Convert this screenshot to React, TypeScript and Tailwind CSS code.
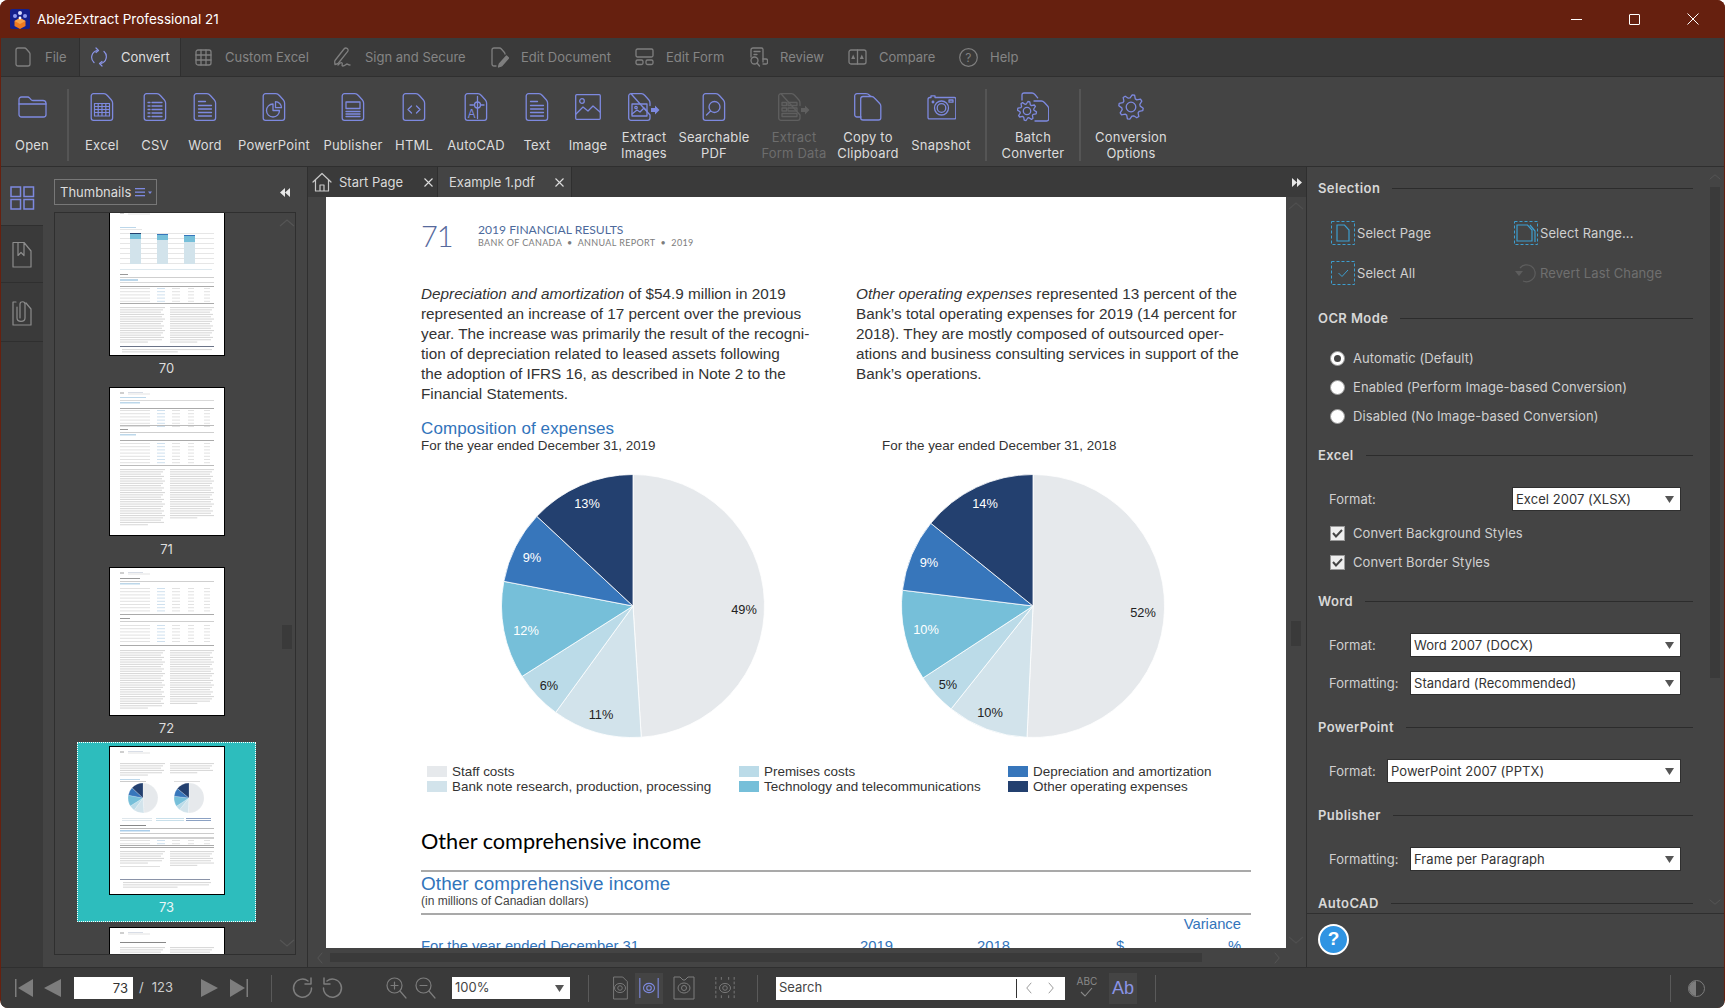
import React from "react";

const BLUE = "#7d89df";
const GRAY = "#7f7f7f";

const DOC = "M3.5 .7H14c1.5 0 2.5.8 3.4 1.8l4 4.5c.8.9 1.2 1.8 1.2 3V25c0 1.3-1 2.3-2.3 2.3H3.5c-1.3 0-2.3-1-2.3-2.3V3c0-1.3 1-2.3 2.3-2.3z";

function Svg({ w, h, c = BLUE, sw = 1.3, children, className }: { w: number; h: number; c?: string; sw?: number; children: React.ReactNode; className?: string }) {
  return (
    <svg width={w} height={h} viewBox={`0 0 ${w} ${h}`} fill="none" stroke={c} strokeWidth={sw} strokeLinecap="round" strokeLinejoin="round" className={className}>
      {children}
    </svg>
  );
}

function gearPath(cx: number, cy: number, ro: number, ri: number, teeth: number) {
  let d = "";
  const n = teeth * 4;
  for (let i = 0; i < n; i++) {
    const a = (i / n) * Math.PI * 2 + Math.PI / n;
    const r = i % 4 < 2 ? ro : ri;
    const x = cx + r * Math.sin(a);
    const y = cy - r * Math.cos(a);
    d += `${i === 0 ? "M" : "L"}${x.toFixed(1)} ${y.toFixed(1)} `;
  }
  return d + "Z";
}

function Doc({ children, c = BLUE }: { children?: React.ReactNode; c?: string }) {
  return (
    <Svg w={24} h={28} c={c}>
      <path d={DOC} />
      {children}
    </Svg>
  );
}

const FileLines = () => (
  <Doc>
    <path d="M5.5 8.5h7M5.5 12.5h13M5.5 16h13M5.5 19.5h13M5.5 23h13" />
  </Doc>
);

const icons: Record<string, React.ReactNode> = {
  open: (
    <Svg w={29} h={22}>
      <path d="M1 3.5C1 2 2 1 3.5 1h6c1 0 1.6.4 2.2 1.1l1.3 1.6c.5.6 1 .8 1.8.8H25c1.7 0 3 1.3 3 3V18.5c0 1.4-1.1 2.5-2.5 2.5h-22C2.100 21 1 19.900 1 18.500z" />
      <path d="M1 8h27" />
    </Svg>
  ),
  excel: (
    <Doc>
      <path d="M4.500 10.500h15v12.500h-15zM4.500 13.500h15M4.500 16.500h15M4.500 19.500h15M8.200 10.500v12.500M12 10.500v12.500M15.800 10.500v12.500" strokeWidth={1.2} />
    </Doc>
  ),
  csv: (
    <Doc>
      <path d="M5 9.500h2M9 9.500h10M5 13h2M9 13h10M5 16.500h2M9 16.500h10M5 20h2M9 20h10M5 23.500h2M9 23.500h10" />
    </Doc>
  ),
  word: <FileLines />,
  ppt: (
    <Doc>
      <path d="M11 11a6.500 6.500 0 1 0 6.500 6.500H11z" />
      <path d="M13.500 8.700a6 6 0 0 1 6 6h-6z" />
    </Doc>
  ),
  pub: (
    <Doc>
      <path d="M5 9h14v6.500H5zM5 18.500h14M5 21h14M5 23.500h14" />
    </Doc>
  ),
  html: (
    <Doc>
      <path d="M9.500 13l-3.500 3.500 3.500 3.500M14.500 13l3.500 3.500-3.500 3.500" />
    </Doc>
  ),
  cad: (
    <Doc>
      <path d="M13.500 3.500v22M6 12h3.500M17 12h3" />
      <circle cx="13.500" cy="12" r="3" />
      <text x="3.500" y="25" fontSize="12" fill={BLUE} stroke="none" fontFamily="Inter">A</text>
    </Doc>
  ),
  text: <FileLines />,
  image: (
    <Svg w={26} h={26}>
      <rect x=".7" y=".7" width="24.600" height="24.600" rx="1" />
      <circle cx="7" cy="7" r="2.300" />
      <path d="M1 20l7-7 5 4 5-5 7 6" />
    </Svg>
  ),
  eimg: (
    <Svg w={32} h={28}>
      <path d="M3 .7h10.500c1.500 0 2.500.8 3.400 1.800l4 4.500c.8.9 1.100 1.800 1.100 3v2.500M22 22v3c0 1.300-1 2.300-2.300 2.300H3c-1.300 0-2.300-1-2.300-2.300V3C.7 1.700 1.700.7 3 .7z" />
      <rect x="4" y="11" width="15" height="12" />
      <circle cx="8" cy="14.500" r="1.200" />
      <path d="M4 21l5-4 3 2 4-4 3 3" />
      <path d="M23 15h4v-2.500l4.500 4.500-4.500 4.500V19h-4z" fill={BLUE} stroke="none" />
    </Svg>
  ),
  search: (
    <Doc>
      <circle cx="12.500" cy="14" r="5.500" />
      <path d="M8.500 18l-4 4" />
    </Doc>
  ),
  eform: (
    <Svg w={32} h={28} c="#5f5f5f">
      <path d="M3 .7h10.500c1.500 0 2.500.8 3.400 1.800l4 4.500c.8.9 1.100 1.800 1.100 3v2.500M22 22v3c0 1.300-1 2.300-2.300 2.300H3c-1.300 0-2.300-1-2.300-2.300V3C.7 1.700 1.700.7 3 .7z" />
      <rect x="4" y="9.500" width="4.500" height="3" />
      <rect x="10" y="9.500" width="9" height="3" />
      <rect x="4" y="15" width="4.500" height="3" />
      <rect x="10" y="15" width="9" height="3" />
      <rect x="4" y="20.500" width="15" height="3" />
      <path d="M23 15h4v-2.500l4.500 4.500-4.500 4.500V19h-4z" fill="#5f5f5f" stroke="none" />
    </Svg>
  ),
  copy: (
    <Svg w={28} h={28}>
      <path d="M7 24H3c-1.300 0-2.300-1-2.300-2.300V3C.7 1.700 1.700.7 3 .7h9c1.500 0 2.600.6 3.500 1.500l.8 1" />
      <path d="M9 3.500h8.500c1.400 0 2.300.7 3.200 1.700l5 5.300c.8.9 1.100 1.700 1.100 2.800v11.400c0 1.300-1 2.300-2.300 2.300H9c-1.300 0-2.300-1-2.300-2.300V5.800c0-1.300 1-2.300 2.300-2.300z" />
    </Svg>
  ),
  camera: (
    <Svg w={29} h={26}>
      <path d="M1 5.500C1 4.500 1.700 3.500 3 3.500h1V1.800h4v1.700h19.500c.8 0 1.300.6 1.300 1.500v18.500c0 .8-.6 1.300-1.300 1.300H2.300c-.8 0-1.300-.5-1.300-1.300z" />
      <circle cx="14.500" cy="14" r="7" />
      <circle cx="14.500" cy="14" r="4.300" />
      <circle cx="6" cy="8" r=".8" fill={BLUE} />
      <rect x="22" y="6" width="4" height="2.200" />
    </Svg>
  ),
  batch: (
    <Svg w={32} h={31}>
      <path d="M5 8V3c0-1.200.8-2 2-2h8c1.300 0 2 .6 2.900 1.500l2.800 3.300" />
      <path d="M17 9h7.500c1.300 0 2 .6 2.900 1.500l3.200 3.500c.8.900 1.100 1.600 1.100 2.700V27c0 1.200-.8 2-2 2H18" />
      <path d={gearPath(10, 19, 9.500, 7, 8)} />
      <circle cx="10" cy="19" r="3.700" />
    </Svg>
  ),
  gear: (
    <Svg w={26} h={26}>
      <path d={gearPath(13, 13, 12.300, 9.200, 8)} />
      <circle cx="13" cy="13" r="4.800" />
    </Svg>
  ),
};

type R = { k: string; l: string[]; w: string; off?: boolean };
function RibbonItem({ k, l, w, off }: R) {
  return (
    <div className={`flex flex-col items-center shrink-0 ${w}`}>
      <div className="h-[30px] flex items-center justify-center">{icons[k]}</div>
      <div className={`mt-[7px] h-[32px] flex flex-col justify-center items-center text-[13px] leading-[16px] tracking-[0.2px] whitespace-nowrap ${off ? "text-[#6d6d6d]" : "text-[#dcdcdc]"}`}>
        {l.map((t) => (
          <span key={t}>{t}</span>
        ))}
      </div>
    </div>
  );
}
const RSep = () => <div className="w-[2px] h-[72px] mt-[-3px] bg-[#555555] shrink-0" />;

const tabIcons: Record<string, React.ReactNode> = {
  file: (
    <Svg w={16} h={20} c={GRAY}>
      <path d="M3 1h6.500c.8 0 1.300.3 1.900 1l3 3.500c.4.500.6 1 .6 1.600V17c0 1.200-.8 2-2 2H3c-1.200 0-2-.8-2-2V3c0-1.200.8-2 2-2z" />
    </Svg>
  ),
  convert: (
    <Svg w={16} h={20} c="#8a94e6" sw={1.2}>
      <path d="M3 15.500A7 7 0 0 1 6 3.500M13 4.500a7 7 0 0 1-3 12" />
      <path d="M5 1l2.500 2.500L5 5.500M11 19l-2.500-2.500L11 14.500" />
    </Svg>
  ),
  excel: (
    <Svg w={17} h={17} c={GRAY}>
      <rect x="1" y="1" width="15" height="15" rx="2" />
      <path d="M1 6h15M1 11h15M6 1v15M11 1v15" />
    </Svg>
  ),
  sign: (
    <Svg w={20} h={20} c={GRAY}>
      <path d="M2 13.500L11 2c1-1.200 2.300-1.200 3.300-.4s1 2.100.2 3.100L5.500 16c-.8.900-3.500 1.500-3.500 1.500s-.6-2.800 0-4z" />
      <path d="M5 18c2-2 3-3 4-2s-1 3 1 3 3-2 4-2 1 1 3 1" />
    </Svg>
  ),
  edit: (
    <Svg w={18} h={21} c={GRAY}>
      <path d="M5 19H3c-1.200 0-2-.8-2-2V3c0-1.200.8-2 2-2h5.500c.8 0 1.300.3 1.900 1l3 3.500c.4.500.6 1 .6 1.600" />
      <path d="M15.500 9l2 2-7 8-3 1 .8-3z" fill={GRAY} />
    </Svg>
  ),
  form: (
    <Svg w={19} h={18} c={GRAY}>
      <rect x="1" y="1" width="17" height="8" rx="1.500" />
      <rect x="1" y="12" width="7" height="4.500" rx="1.500" />
      <rect x="11" y="12" width="7" height="4.500" rx="1.500" />
    </Svg>
  ),
  review: (
    <Svg w={19} h={20} c={GRAY}>
      <path d="M2 10V3c0-1.200.8-2 2-2h8.500c.9 0 1.500.6 1.500 1.500V15" />
      <path d="M5 4.500h6M5 7.500h3" />
      <circle cx="5.500" cy="13.500" r="3.500" />
      <path d="M8 16l2.500 3M14 12h3c1 0 1.500.5 1.500 1.500v2c0 1-.5 1.500-1.500 1.500h-3" />
    </Svg>
  ),
  compare: (
    <Svg w={19} h={16} c={GRAY}>
      <rect x="1" y="1" width="17" height="14" rx="2" />
      <path d="M9.500 1v14" />
      <path d="M5.200 5.500l2 4.500h-4zM13.800 5.500l2 4.500h-4z" fill={GRAY} stroke="none" />
    </Svg>
  ),
  help: (
    <svg width="19" height="19" viewBox="0 0 19 19" fill="none" stroke={GRAY} strokeWidth="1.200">
      <circle cx="9.500" cy="9.500" r="8.800" />
      <text x="6.300" y="14" fontSize="12" fill={GRAY} stroke="none" fontFamily="Inter">?</text>
    </svg>
  ),
};

function Tab({ k, l, w, gap, active }: { k: string; l: string; w: string; gap: string; active?: boolean }) {
  return (
    <div className={`h-full flex items-center shrink-0 ${w} ${gap} ${active ? "bg-[#444444] border-x border-[#2f2f2f] pl-[11px] text-[#dedede]" : "pl-[14px] text-[#858585]"}`}>
      {tabIcons[k]}
      <span className="text-[13px] whitespace-nowrap pt-[2px]">{l}</span>
    </div>
  );
}

function Logo() {
  return (
    <svg width="20" height="20" viewBox="0 0 20 20">
      <rect width="20" height="20" rx="2" fill="#14208c" />
      <path d="M10 9l5.500 3v5L10 20l-5.500-3v-5z" fill="#ee7a20" />
      <path d="M10 9l5.500 3-5.500 3-5.500-3z" fill="#f6a24a" />
      <circle cx="10" cy="4" r="2" fill="#d8ddff" />
      <circle cx="5" cy="7" r="2" fill="#8f9bf0" />
      <circle cx="15" cy="7" r="2" fill="#8f9bf0" />
      <circle cx="10" cy="9" r="1.400" fill="#ffffff" />
    </svg>
  );
}

function TitleBar() {
  return (
    <div className="h-[38px] bg-[#66200f] flex items-center shrink-0 text-white">
      <div className="ml-[10px]"><Logo /></div>
      <span className="ml-[7px] text-[13.5px] pt-[1px] whitespace-nowrap">Able2Extract Professional 21</span>
      <div className="ml-auto flex items-center">
        <div className="w-[58px] flex justify-center"><div className="w-[11px] h-px bg-white" /></div>
        <div className="w-[59px] flex justify-center"><div className="w-[11px] h-[11px] border border-white rounded-[1px]" /></div>
        <div className="w-[60px] flex justify-center pr-[2px]">
          <svg width="12" height="12" viewBox="0 0 12 12" stroke="#fff" strokeWidth="1"><path d="M.5.500l11 11M11.500.500l-11 11" /></svg>
        </div>
        <div className="w-[1px]" />
      </div>
    </div>
  );
}

function TabBar() {
  return (
    <div className="h-[39px] bg-[#3a3a3a] flex shrink-0 border-b border-[#2f2f2f]">
      <Tab k="file" l="File" w="w-[78px]" gap="gap-[14px]" />
      <Tab k="convert" l="Convert" w="w-[102px]" gap="gap-[14px]" active />
      <Tab k="excel" l="Custom Excel" w="w-[138px]" gap="gap-[13px]" />
      <Tab k="sign" l="Sign and Secure" w="w-[158px]" gap="gap-[12px]" />
      <Tab k="edit" l="Edit Document" w="w-[144px]" gap="gap-[12px]" />
      <Tab k="form" l="Edit Form" w="w-[114px]" gap="gap-[12px]" />
      <Tab k="review" l="Review" w="w-[99px]" gap="gap-[12px]" />
      <Tab k="compare" l="Compare" w="w-[111px]" gap="gap-[12px]" />
      <Tab k="help" l="Help" w="w-[90px]" gap="gap-[12px]" />
    </div>
  );
}

function Ribbon() {
  return (
    <div className="h-[90px] bg-[#444444] flex shrink-0 pt-[15px] border-b border-[#2f2f2f]">
      <RibbonItem k="open" l={["Open"]} w="w-[62px]" />
      <div className="w-[4px]" />
      <RSep />
      <RibbonItem k="excel" l={["Excel"]} w="w-[66px]" />
      <RibbonItem k="csv" l={["CSV"]} w="w-[40px]" />
      <RibbonItem k="word" l={["Word"]} w="w-[60px]" />
      <RibbonItem k="ppt" l={["PowerPoint"]} w="w-[78px]" />
      <RibbonItem k="pub" l={["Publisher"]} w="w-[80px]" />
      <RibbonItem k="html" l={["HTML"]} w="w-[42px]" />
      <RibbonItem k="cad" l={["AutoCAD"]} w="w-[82px]" />
      <RibbonItem k="text" l={["Text"]} w="w-[40px]" />
      <RibbonItem k="image" l={["Image"]} w="w-[62px]" />
      <RibbonItem k="eimg" l={["Extract", "Images"]} w="w-[50px]" />
      <RibbonItem k="search" l={["Searchable", "PDF"]} w="w-[90px]" />
      <RibbonItem k="eform" l={["Extract", "Form Data"]} w="w-[70px]" off />
      <RibbonItem k="copy" l={["Copy to", "Clipboard"]} w="w-[78px]" />
      <RibbonItem k="camera" l={["Snapshot"]} w="w-[68px]" />
      <div className="w-[10px]" />
      <RSep />
      <RibbonItem k="batch" l={["Batch", "Converter"]} w="w-[92px]" />
      <RSep />
      <RibbonItem k="gear" l={["Conversion", "Options"]} w="w-[100px]" />
    </div>
  );
}

/* ---------- Pie ---------- */
const PIE = ["#e6e9ec", "#d2e3eb", "#bbdbe8", "#76bfd9", "#3776bb", "#23406f"];
function piePaths(cx: number, cy: number, r: number, ends: number[]) {
  let prev = 0;
  return ends.map((e) => {
    const p = (a: number) => {
      const t = (a * Math.PI) / 180;
      return `${(cx + r * Math.sin(t)).toFixed(2)} ${(cy - r * Math.cos(t)).toFixed(2)}`;
    };
    const d = `M${cx} ${cy}L${p(prev)}A${r} ${r} 0 ${e - prev > 180 ? 1 : 0} 1 ${p(e)}Z`;
    prev = e;
    return d;
  });
}

type Lab = [number, number, string, boolean];
function Pie({ cy, ends, labs }: { cy: number; ends: number[]; labs: Lab[] }) {
  const d = piePaths(140, cy, 131.500, ends);
  return (
    <svg width="280" height="280" viewBox="0 0 280 280" className="shrink-0">
      {d.map((x, i) => (
        <path key={i} d={x} fill={PIE[i]} stroke="#fff" strokeWidth="0.800" />
      ))}
      {labs.map(([x, y, t, w]) => (
        <text key={t + x} x={x} y={y} textAnchor="middle" dominantBaseline="central" fontSize="12.800" fill={w ? "#ffffff" : "#222222"} fontFamily="'Liberation Sans', sans-serif">
          {t}
        </text>
      ))}
    </svg>
  );
}

/* ---------- Thumbs ---------- */
function para(x: number, y: number, w: number, n: number, key: string, step = 2.300, c = "#d9d9d9") {
  const out: React.ReactNode[] = [];
  for (let i = 0; i < n; i++) {
    const ww = i === n - 1 ? w * 0.62 : w - ((i * 7) % 5);
    out.push(<rect key={key + i} x={x} y={y + i * step} width={ww} height={1.100} fill={c} />);
  }
  return out;
}
function hl(x: number, y: number, w: number, c = "#bfbfbf", h = 1) {
  return <rect key={`${x}-${y}-${w}`} x={x} y={y} width={w} height={h} fill={c} />;
}
function head() {
  return [hl(10, 4, 4, "#cfcfcf", 2), hl(18, 4, 15, "#d8dde6"), hl(18, 5.500, 22, "#e3e3e3")];
}
function tableRows(y: number, rows: number, step = 3.200) {
  const out: React.ReactNode[] = [];
  for (let i = 0; i < rows; i++) {
    out.push(hl(10, y + i * step, 30, "#e2e2e2", 1));
    out.push(hl(47, y + i * step, 8, "#cfe0ee", 1));
    out.push(hl(62, y + i * step, 8, "#e2e2e2", 1));
    out.push(hl(78, y + i * step, 6, "#e2e2e2", 1));
    out.push(hl(94, y + i * step, 6, "#e2e2e2", 1));
  }
  return out;
}

function Thumb({ n }: { n: number }) {
  let c: React.ReactNode = null;
  if (n === 70) {
    c = (
      <>
        {head()}
        {hl(10, 19, 16, "#bcd7ea")}
        {hl(10, 21, 22, "#e6e6e6")}
        {[25, 30, 35, 40, 45, 50, 55].map((y) => hl(10, y, 94, "#e6e6e6"))}
        <rect x="20" y="25" width="11" height="1" fill="#23406f" />
        <rect x="20" y="26" width="11" height="5" fill="#76bfd9" />
        <rect x="20" y="31" width="11" height="25" fill="#d2e3eb" />
        <rect x="47" y="26" width="11" height="1" fill="#3776bb" />
        <rect x="47" y="27" width="11" height="5" fill="#76bfd9" />
        <rect x="47" y="32" width="11" height="24" fill="#d2e3eb" />
        <rect x="74" y="27" width="11" height="1" fill="#3776bb" />
        <rect x="74" y="28" width="11" height="6" fill="#76bfd9" />
        <rect x="74" y="34" width="11" height="22" fill="#d2e3eb" />
        {hl(10, 61, 92, "#dde8ee")}
        {hl(10, 66, 8, "#999999")}
        {hl(10, 69, 94, "#cfcfcf")}
        {hl(10, 71, 18, "#bcd7ea", 2)}
        {hl(10, 74, 94, "#d9d9d9")}
        {hl(10, 78, 94, "#aaaaaa")}
        {tableRows(80, 5)}
        {hl(10, 95, 94, "#aaaaaa")}
        {para(10, 99, 45, 16, "a")}
        {para(60, 99, 44, 16, "b")}
        {hl(10, 138, 94, "#6b7488")}
        {para(12, 141, 90, 2, "f")}
      </>
    );
  } else if (n === 71) {
    c = (
      <>
        {head()}
        {hl(10, 9, 26, "#bcd7ea")}
        {hl(10, 12, 94, "#d9d9d9")}
        {hl(10, 14, 20, "#bcd7ea", 1.500)}
        {hl(10, 20, 94, "#aaaaaa")}
        {tableRows(22, 6)}
        {hl(10, 37, 94, "#bbbbbb")}
        {hl(10, 41, 8, "#999999")}
        {hl(10, 44, 94, "#cfcfcf")}
        {hl(10, 46, 16, "#bcd7ea", 1.500)}
        {hl(10, 52, 94, "#aaaaaa")}
        {tableRows(55, 7)}
        {hl(10, 77, 94, "#bbbbbb")}
        {para(10, 81, 45, 25, "a", 2.300)}
        {para(60, 81, 44, 22, "b", 2.300)}
      </>
    );
  } else if (n === 72) {
    c = (
      <>
        {head()}
        {hl(10, 10, 20, "#999999")}
        {hl(10, 13, 94, "#cfcfcf")}
        {hl(10, 15, 20, "#bcd7ea", 1.500)}
        {tableRows(20, 8)}
        {hl(10, 46, 94, "#aaaaaa")}
        {hl(10, 50, 10, "#999999")}
        {hl(10, 53, 94, "#cfcfcf")}
        {tableRows(57, 6)}
        {hl(10, 77, 94, "#aaaaaa")}
        {para(10, 82, 45, 26, "a")}
        {para(60, 82, 44, 24, "b")}
      </>
    );
  } else if (n === 73) {
    const d1 = piePaths(33, 51, 15, [176.400, 216, 237.600, 280.800, 313, 360]);
    const d2 = piePaths(79, 51, 15, [182.600, 218.500, 236.800, 276.900, 309, 360]);
    c = (
      <>
        {head()}
        {para(10, 16, 45, 6, "a")}
        {para(60, 16, 44, 5, "b")}
        {hl(10, 32, 20, "#bcd7ea")}
        {hl(10, 34, 26, "#cccccc")}
        {hl(64, 34, 26, "#dddddd")}
        {d1.map((x, i) => <path key={i} d={x} fill={PIE[i]} stroke="#fff" strokeWidth=".2" />)}
        {d2.map((x, i) => <path key={"p" + i} d={x} fill={PIE[i]} stroke="#fff" strokeWidth=".2" />)}
        {hl(12, 71, 30, "#dfe7ec")}
        {hl(12, 73, 30, "#dfe7ec")}
        {hl(46, 71, 28, "#c8dfea")}
        {hl(46, 73, 28, "#c8dfea")}
        {hl(76, 71, 25, "#8ba1c3")}
        {hl(76, 73, 25, "#8ba1c3")}
        {hl(10, 78, 26, "#888888")}
        {hl(10, 81, 94, "#bbbbbb")}
        {hl(10, 83, 30, "#a9cdea", 1.500)}
        {hl(10, 86, 94, "#cccccc")}
        {hl(10, 90, 94, "#d0d0d0", 2)}
        {tableRows(93, 2)}
        {hl(10, 98, 94, "#aaaaaa")}
        {hl(10, 100, 94, "#aaaaaa")}
        {para(10, 104, 45, 6, "c")}
        {para(60, 104, 44, 7, "d")}
        {hl(10, 119, 40, "#e0e0e0")}
        {hl(10, 132, 90, "#8a93a8")}
        {para(13, 135, 88, 3, "e")}
      </>
    );
  } else {
    c = (
      <>
        {head()}
        {hl(10, 14, 46, "#888888")}
        {para(10, 19, 45, 20, "a")}
        {para(60, 19, 44, 20, "b")}
      </>
    );
  }
  return (
    <div className="bg-white border border-black w-[116px] h-[149px] shrink-0">
      <svg width="114" height="147" viewBox="0 0 114 147">{c}</svg>
    </div>
  );
}

const Chevron = ({ dir, c = "#555555", w = 16 }: { dir: "up" | "down" | "left" | "right"; c?: string; w?: number }) => {
  const d = {
    up: "M1 8l7-6 7 6",
    down: "M1 2l7 6 7-6",
    left: "M8 1L2 8l6 7",
    right: "M2 1l6 7-6 7",
  }[dir];
  return dir === "up" || dir === "down" ? (
    <svg width={w} height="10" viewBox="0 0 16 10" fill="none" stroke={c} strokeWidth="1.300"><path d={d} /></svg>
  ) : (
    <svg width="10" height={w} viewBox="0 0 10 16" fill="none" stroke={c} strokeWidth="1.300"><path d={d} /></svg>
  );
};

const DoubleArrow = ({ left }: { left?: boolean }) => (
  <svg width="10" height="9" viewBox="0 0 10 9" fill="#e8e8e8">
    {left ? <path d="M5 0v9L0 4.500zM10 0v9L5 4.500z" /> : <path d="M0 0v9l5-4.500zM5 0v9l5-4.500z" />}
  </svg>
);

function Rail() {
  return (
    <div className="w-[42px] bg-[#3a3a3a] flex flex-col shrink-0">
      <div className="h-[58px] bg-[#444444] flex items-center justify-center pt-[4px]">
        <svg width="25" height="24" viewBox="0 0 25 24" fill="none" stroke={BLUE} strokeWidth="1.500">
          <rect x="1" y="1" width="9.500" height="9.500" />
          <rect x="14" y="1" width="9.500" height="9.500" />
          <rect x="1" y="13.500" width="9.500" height="9.500" />
          <rect x="14" y="13.500" width="9.500" height="9.500" />
        </svg>
      </div>
      <div className="h-[58px] border-y border-[#2f2f2f] flex items-center justify-center">
        <Svg w={20} h={27} c="#8c8c8c" sw={1.200}>
          <path d="M1 1.500h11l7 8.500v16H1zM6 1.500v13l3-3 3 3v-13" />
        </Svg>
      </div>
      <div className="h-[59px] border-b border-[#2f2f2f] flex items-center justify-center">
        <Svg w={20} h={28} c="#8c8c8c" sw={1.200}>
          <path d="M4 4H1v23h18V11l-5-6M8 20V6c0-3 5-3 5 0v14c0 4.500-8 4.500-8 0V9" />
        </Svg>
      </div>
    </div>
  );
}

function ThumbPanel() {
  return (
    <div className="w-[265px] bg-[#444444] flex flex-col shrink-0 pl-[11px] pr-[11px] border-r border-[#2f2f2f]">
      <div className="mt-[12px] h-[26px] flex items-center justify-between shrink-0">
        <div className="w-[103px] h-[26px] border border-[#777777] flex items-center pl-[5px] gap-[4px] text-[13px] text-[#dddddd]">
          <span className="pt-[2px]">Thumbnails</span>
          <svg width="17" height="9" viewBox="0 0 17 9" fill={BLUE}>
            <rect width="10" height="1.300" />
            <rect y="3.500" width="10" height="1.300" />
            <rect y="7" width="10" height="1.300" />
            <path d="M13 3.500h4l-2 2.500z" />
          </svg>
        </div>
        <div className="mr-[6px]"><DoubleArrow left /></div>
      </div>
      <div className="mt-[7px] flex-1 mb-[12px] border border-[#2f2f2f] flex overflow-hidden min-h-0">
        <div className="w-[223px] flex flex-col items-center mt-[-6px] shrink-0 text-[13px] text-[#dddddd]">
          <Thumb n={70} />
          <div className="h-[31px] flex items-center shrink-0 pb-[5px]">70</div>
          <Thumb n={71} />
          <div className="h-[31px] flex items-center shrink-0 pb-[3px]">71</div>
          <Thumb n={72} />
          <div className="h-[26px] flex items-center shrink-0 pb-[1px]">72</div>
          <div className="w-[179px] bg-[#2dbdbd] border border-dotted border-white pt-[3px] flex flex-col items-center shrink-0">
            <Thumb n={73} />
            <div className="h-[26px] flex items-center text-[#e8f7f7]">73</div>
          </div>
          <div className="h-[5px] shrink-0" />
          <Thumb n={74} />
        </div>
        <div className="flex-1 flex flex-col items-center pt-[5px] pb-[6px]">
          <Chevron dir="up" />
          <div className="w-[10px] h-[24px] bg-[#3a3a3a] mt-[397px]" />
          <div className="mt-auto"><Chevron dir="down" /></div>
        </div>
      </div>
    </div>
  );
}

function TabX() {
  return (
    <svg width="9" height="9" viewBox="0 0 9 9" stroke="#dddddd" strokeWidth="1.100"><path d="M.5.500l8 8M8.500.500l-8 8" /></svg>
  );
}

function DocTabs() {
  return (
    <div className="h-[30px] bg-[#3a3a3a] flex items-stretch shrink-0 text-[13px] text-[#d9d9d9]">
      <div className="w-[130px] flex items-center border-r border-[#2f2f2f] pl-[4px] bg-[#3a3a3a]">
        <Svg w={20} h={20} c="#c8c8c8" sw={1.200}>
          <path d="M1 10L10 1.500l9 8.500M3.500 8v11h13V8M8 19v-6h4v6" />
        </Svg>
        <span className="ml-[7px] pt-[2px]">Start Page</span>
        <span className="ml-[21px] flex"><TabX /></span>
      </div>
      <div className="w-[134px] flex items-center bg-[#444444] border-r border-[#2f2f2f] pl-[11px]">
        <span className="pt-[2px]">Example 1.pdf</span>
        <span className="ml-[20px] flex"><TabX /></span>
      </div>
      <div className="flex-1 flex justify-end items-center pr-[4px]"><DoubleArrow /></div>
    </div>
  );
}

const docFont = "[font-family:'Liberation_Sans',Arial,sans-serif]";

function Page() {
  return (
    <div className={`w-[960px] bg-white overflow-hidden pl-[95px] pr-[35px] pt-[24px] shrink-0 text-[#333333] ${docFont}`}>
      <div className="flex h-[29px] items-center">
        <span className="w-[57px] text-[29px] leading-[28px] font-light text-[#56699c] [font-family:Lato,sans-serif] tracking-[-1px]">71</span>
        <div className="flex flex-col [font-family:Lato,sans-serif]">
          <span className="text-[12.100px] leading-[14px] text-[#4d6a9c] whitespace-nowrap">2019 FINANCIAL RESULTS</span>
          <span className="text-[9px] leading-[12px] text-[#7d7d7d] tracking-[0.35px] whitespace-nowrap">BANK OF CANADA &nbsp;•&nbsp; ANNUAL REPORT &nbsp;•&nbsp; 2019</span>
        </div>
      </div>
      <div className="mt-[34px] flex text-[15.300px] leading-[20px] whitespace-nowrap">
        <div className="w-[435px]">
          <div><i>Depreciation and amortization</i> of $54.9 million in 2019</div>
          <div>represented an increase of 17 percent over the previous</div>
          <div>year. The increase was primarily the result of the recogni-</div>
          <div>tion of depreciation related to leased assets following</div>
          <div>the adoption of IFRS 16, as described in Note 2 to the</div>
          <div>Financial Statements.</div>
        </div>
        <div>
          <div><i>Other operating expenses</i> represented 13 percent of the</div>
          <div>Bank’s total operating expenses for 2019 (14 percent for</div>
          <div>2018). They are mostly composed of outsourced oper-</div>
          <div>ations and business consulting services in support of the</div>
          <div>Bank’s operations.</div>
        </div>
      </div>
      <div className="mt-[15px] h-[19px] text-[17px] leading-[20px] text-[#3274bb] tracking-[0.1px]">Composition of expenses</div>
      <div className="flex h-[16px] text-[13.400px] leading-[16px] text-[#333333]">
        <span className="w-[461px]">For the year ended December 31, 2019</span>
        <span>For the year ended December 31, 2018</span>
      </div>
      <div className="mt-[12px] pl-[72px] flex gap-[120px]">
        <Pie
          cy={140}
          ends={[176.400, 216, 237.600, 280.800, 313, 360]}
          labs={[[251, 143, "49%", false], [94, 37, "13%", true], [39, 91, "9%", true], [33, 164, "12%", true], [56, 219, "6%", false], [108, 248, "11%", false]]}
        />
        <Pie
          cy={140}
          ends={[182.600, 218.500, 236.800, 276.900, 309, 360]}
          labs={[[250, 146, "52%", false], [92, 37, "14%", true], [36, 96, "9%", true], [33, 163, "10%", true], [55, 218, "5%", false], [97, 246, "10%", false]]}
        />
      </div>
      <div className="mt-[18px] pl-[6px] grid grid-cols-[312px_269px_auto] text-[13.450px] leading-[15px] text-[#333333] whitespace-nowrap">
        {[
          ["#e6e9ec", "Staff costs"],
          ["#bbdbe8", "Premises costs"],
          ["#3776bb", "Depreciation and amortization"],
          ["#d2e3eb", "Bank note research, production, processing"],
          ["#76bfd9", "Technology and telecommunications"],
          ["#23406f", "Other operating expenses"],
        ].map(([c, t]) => (
          <div key={t} className="flex items-center gap-[5px]">
            <span className="w-[20px] h-[11px] shrink-0" style={{ background: c }} />
            <span>{t}</span>
          </div>
        ))}
      </div>
      <div className="mt-[33px] h-[28px] text-[21.700px] leading-[28px] text-black [font-family:Lato,sans-serif]">Other comprehensive income</div>
      <div className="mt-[15px] h-[2px] bg-[#a9a9a9]" />
      <div className="mt-px h-[22px] text-[18.900px] leading-[22px] text-[#3274bb] tracking-[0.1px]">Other comprehensive income</div>
      <div className="h-[13px] text-[12px] leading-[13px] text-[#444444]">(in millions of Canadian dollars)</div>
      <div className="mt-[5px] h-[2px] bg-[#a9a9a9]" />
      <div className="mt-px h-[16px] text-[14.800px] leading-[16px] text-[#3274bb] text-right pr-[10px]">Variance</div>
      <div className="mt-[6px] grid grid-cols-[439px_117px_139px_112px_auto] text-[14.800px] leading-[16px] text-[#3274bb] whitespace-nowrap">
        <span>For the year ended December 31</span>
        <span>2019</span>
        <span>2018</span>
        <span>$</span>
        <span>%</span>
      </div>
    </div>
  );
}

function DocArea() {
  return (
    <div className="w-[998px] flex flex-col shrink-0 bg-[#444444]">
      <DocTabs />
      <div className="flex-1 flex min-h-0 pl-[18px]">
        <Page />
        <div className="flex-1 flex flex-col items-center pt-[4px] pb-[3px]">
          <Chevron dir="up" c="#4f4f4f" />
          <div className="w-[10px] h-[25px] bg-[#3a3a3a] mt-[410px]" />
          <div className="mt-auto"><Chevron dir="down" c="#4f4f4f" /></div>
        </div>
      </div>
      <div className="h-[19px] flex items-center shrink-0 pl-[7px] pr-[24px]">
        <Chevron dir="left" c="#555555" w={12} />
        <div className="ml-[5px] w-[872px] h-[9px] bg-[#3a3a3a]" />
        <div className="ml-auto"><Chevron dir="right" c="#555555" w={12} /></div>
      </div>
    </div>
  );
}

/* ---------- Right panel ---------- */
function Sec({ t, mt }: { t: string; mt: string }) {
  return (
    <div className={`flex items-center h-[16px] gap-[12px] ${mt}`}>
      <span className="text-[13px] font-semibold text-[#d8d8d8] tracking-[0.4px] leading-[16px] whitespace-nowrap">{t}</span>
      <div className="flex-1 h-px bg-[#2c2c2c]" />
    </div>
  );
}

function Select({ v, w }: { v: string; w: string }) {
  return (
    <div className={`h-[24px] bg-white border border-[#2f2f2f] flex items-center pl-[3px] pr-[6px] justify-between text-[13px] text-[#333333] tracking-[0.05px] whitespace-nowrap ${w}`}>
      <span className="pt-[2px]">{v}</span>
      <svg width="9" height="7" viewBox="0 0 9 7" fill="#555555"><path d="M0 0h9L4.500 7z" /></svg>
    </div>
  );
}

function Row({ l, v, w, mt }: { l: string; v: string; w: string; mt: string }) {
  return (
    <div className={`flex items-center justify-between pl-[11px] pr-[12px] ${mt}`}>
      <span className="text-[13px] text-[#d0d0d0] pt-[2px]">{l}</span>
      <Select v={v} w={w} />
    </div>
  );
}

function Radio({ l, on }: { l: string; on?: boolean }) {
  return (
    <div className="flex items-center h-[16px] gap-[8px]">
      <span className="w-[15px] h-[15px] rounded-full bg-white border border-[#999999] flex items-center justify-center shrink-0">
        {on && <span className="w-[7px] h-[7px] rounded-full bg-[#444444]" />}
      </span>
      <span className="text-[13px] text-[#d0d0d0] tracking-[0.08px] whitespace-nowrap pt-[2px]">{l}</span>
    </div>
  );
}

function Check({ l }: { l: string }) {
  return (
    <div className="flex items-center h-[16px] gap-[8px]">
      <span className="w-[15px] h-[15px] bg-[#eeeeee] border border-[#999999] flex items-center justify-center shrink-0">
        <svg width="11" height="9" viewBox="0 0 11 9" fill="none" stroke="#444444" strokeWidth="2"><path d="M1 4l3 3.500L10 1" /></svg>
      </span>
      <span className="text-[13px] text-[#d0d0d0] tracking-[0.08px] whitespace-nowrap pt-[2px]">{l}</span>
    </div>
  );
}

const SEL = "#3d9ecf";
function SelIcon({ k }: { k: string }) {
  return (
    <svg width="24" height="24" viewBox="0 0 24 24" fill="none" stroke={SEL} strokeWidth="1">
      <rect x=".5" y=".5" width="23" height="23" strokeDasharray="3 2" />
      {k === "page" && <path d="M6 4h7.500l4.500 5v11H6z" strokeWidth="1.200" />}
      {k === "range" && <path d="M3 4h10.500l4.500 5v11H3zM16 4l5 6v11" strokeWidth="1.200" />}
      {k === "all" && <path d="M7.500 12l3.500 3.500 6-6.500" />}
    </svg>
  );
}

function RightPanel() {
  return (
    <div className="flex-1 min-w-0 bg-[#444444] border-l border-[#2f2f2f] flex flex-col">
      <div className="h-[746px] flex overflow-hidden shrink-0">
        <div className="w-[386px] shrink-0 pl-[11px] pt-[13px]">
          <Sec t="Selection" mt="" />
          <div className="mt-[25px] pl-[13px] grid grid-cols-[183px_auto] gap-y-[16px] text-[13px] tracking-[0.1px] whitespace-nowrap">
            <div className="flex items-center h-[24px] gap-[2px] text-[#d0d0d0]"><SelIcon k="page" /><span className="pt-[2px]">Select Page</span></div>
            <div className="flex items-center h-[24px] gap-[2px] text-[#d0d0d0]"><SelIcon k="range" /><span className="pt-[2px]">Select Range...</span></div>
            <div className="flex items-center h-[24px] gap-[2px] text-[#d0d0d0]"><SelIcon k="all" /><span className="pt-[2px]">Select All</span></div>
            <div className="flex items-center h-[24px] gap-[2px] text-[#6f6f6f]">
              <svg width="24" height="24" viewBox="0 0 24 24" fill="none" stroke="#5d5d5d" strokeWidth="1.200">
                <path d="M6 7a8.500 8.500 0 1 1 3 13" />
                <path d="M1 10h8l-4 5z" fill="#5d5d5d" stroke="none" />
              </svg>
              <span className="pt-[2px]">Revert Last Change</span>
            </div>
          </div>
          <Sec t="OCR Mode" mt="mt-[25px]" />
          <div className="mt-[24px] pl-[12px] flex flex-col gap-[13px]">
            <Radio l="Automatic (Default)" on />
            <Radio l="Enabled (Perform Image-based Conversion)" />
            <Radio l="Disabled (No Image-based Conversion)" />
          </div>
          <Sec t="Excel" mt="mt-[23px]" />
          <Row l="Format:" v="Excel 2007 (XLSX)" w="w-[169px]" mt="mt-[24px]" />
          <div className="mt-[14px] pl-[12px] flex flex-col gap-[13px]">
            <Check l="Convert Background Styles" />
            <Check l="Convert Border Styles" />
          </div>
          <Sec t="Word" mt="mt-[23px]" />
          <Row l="Format:" v="Word 2007 (DOCX)" w="w-[271px]" mt="mt-[24px]" />
          <Row l="Formatting:" v="Standard (Recommended)" w="w-[271px]" mt="mt-[14px]" />
          <Sec t="PowerPoint" mt="mt-[24px]" />
          <Row l="Format:" v="PowerPoint 2007 (PPTX)" w="w-[294px]" mt="mt-[24px]" />
          <Sec t="Publisher" mt="mt-[24px]" />
          <Row l="Formatting:" v="Frame per Paragraph" w="w-[271px]" mt="mt-[24px]" />
          <Sec t="AutoCAD" mt="mt-[24px]" />
        </div>
        <div className="flex-1 flex flex-col items-center pl-[16px] pr-[4px]">
          <div className="mt-[5px]"><Chevron dir="up" w={12} /></div>
          <div className="w-[10px] h-[491px] bg-[#3a3a3a] mt-[5px] shrink-0" />
          <div className="mt-[219px]"><Chevron dir="down" w={12} /></div>
        </div>
      </div>
      <div className="flex-1 border-t border-[#2f2f2f] flex items-center pl-[11px] pb-[2px]">
        <div className="w-[31px] h-[31px] rounded-full bg-[#2f94e3] border-2 border-white flex items-center justify-center text-white text-[19px] font-bold [font-family:'Liberation_Sans',sans-serif]">?</div>
      </div>
    </div>
  );
}

/* ---------- Bottom bar ---------- */
const F = "#7d7d7d";
const BSep = ({ ml }: { ml: string }) => <div className={`w-px h-[27px] bg-[#5a5a5a] shrink-0 ${ml}`} />;
const Eye = () => (
  <g fill="none" stroke={F} strokeWidth="1">
    <ellipse cx="12" cy="13" rx="6" ry="5" />
    <circle cx="12" cy="13" r="2.500" />
  </g>
);

function BottomBar() {
  return (
    <div className="h-[41px] bg-[#3a3a3a] border-t border-[#2f2f2f] flex items-center shrink-0 text-[13px] text-[#cccccc]">
      <svg className="ml-[14px] shrink-0" width="18" height="18" viewBox="0 0 18 18" fill={F}><rect width="1.500" height="18" /><path d="M18 0v18L3 9z" /></svg>
      <svg className="ml-[11px] shrink-0" width="17" height="18" viewBox="0 0 17 18" fill={F}><path d="M17 0v18L0 9z" /></svg>
      <div className="ml-[13px] w-[59px] h-[22px] bg-white text-[#333333] text-right pr-[5px] leading-[22px] text-[13px] shrink-0">73</div>
      <span className="ml-[6px] shrink-0">/</span>
      <span className="ml-[8px] shrink-0">123</span>
      <svg className="ml-[28px] shrink-0" width="17" height="18" viewBox="0 0 17 18" fill={F}><path d="M0 0v18l17-9z" /></svg>
      <svg className="ml-[12px] shrink-0" width="18" height="18" viewBox="0 0 18 18" fill={F}><path d="M0 0v18l15-9z" /><rect x="16.500" width="1.500" height="18" /></svg>
      <BSep ml="ml-[23px]" />
      <Svg w={22} h={22} c={F} sw={1.500} className="ml-[19px] shrink-0">
        <path d="M17 4a9 9 0 1 0 3.500 7" />
        <path d="M20 1v6h-6" />
      </Svg>
      <Svg w={22} h={22} c={F} sw={1.500} className="ml-[9px] shrink-0">
        <path d="M5 4a9 9 0 1 1-3.500 7" />
        <path d="M2 1v6h6" />
      </Svg>
      <Svg w={21} h={22} c={F} sw={1.200} className="ml-[42px] shrink-0">
        <circle cx="8.500" cy="8.500" r="7.500" />
        <path d="M14 14l6 7M5 8.500h7M8.500 5v7" />
      </Svg>
      <Svg w={21} h={22} c={F} sw={1.200} className="ml-[8px] shrink-0">
        <circle cx="8.500" cy="8.500" r="7.500" />
        <path d="M14 14l6 7M5 8.500h7" />
      </Svg>
      <div className="ml-[16px] w-[118px] h-[22px] bg-white flex items-center justify-between pl-[3px] pr-[6px] text-[#444444] shrink-0">
        <span>100%</span>
        <svg width="9" height="7" viewBox="0 0 9 7" fill="#555555"><path d="M0 0h9L4.500 7z" /></svg>
      </div>
      <BSep ml="ml-[18px]" />
      <svg className="ml-[20px] shrink-0" width="22" height="24" viewBox="0 0 24 26" fill="none" stroke={F} strokeWidth="1"><path d="M5 1h10l5 5v19H5z" /><Eye /></svg>
      <div className="ml-[4px] w-[28px] h-[31px] bg-[#444444] flex items-center justify-center shrink-0">
        <svg width="22" height="24" viewBox="0 0 24 26" fill="none" stroke={BLUE} strokeWidth="1.200">
          <path d="M2 2v22M22 2v22" />
          <ellipse cx="12" cy="13" rx="6" ry="5" />
          <circle cx="12" cy="13" r="2.500" />
        </svg>
      </div>
      <svg className="ml-[8px] shrink-0" width="26" height="24" viewBox="0 0 26 24" fill="none" stroke={F} strokeWidth="1"><path d="M3 1h6l3 3h2l3-3h6v22H3z" /><g transform="translate(1,-1)"><Eye /></g></svg>
      <svg className="ml-[17px] shrink-0" width="22" height="24" viewBox="0 0 24 26" fill="none" stroke={F} strokeWidth="1" strokeDasharray="3 2"><path d="M2 1v24M22 1v24M8 1v4M16 1v4M8 21v4M16 21v4" /><g strokeDasharray="none"><Eye /></g></svg>
      <BSep ml="ml-[21px]" />
      <div className="ml-[18px] w-[289px] h-[23px] bg-white flex items-center text-[#444444] text-[13px] pl-[3px] shrink-0">
        <span className="w-[237px]">Search</span>
        <div className="w-px h-[19px] bg-[#333333]" />
        <div className="ml-[7px]"><Chevron dir="left" c="#999999" w={12} /></div>
        <div className="ml-[12px]"><Chevron dir="right" c="#999999" w={12} /></div>
      </div>
      <div className="ml-[11px] w-[22px] h-[26px] flex flex-col items-center text-[10px] leading-[12px] text-[#8a8a8a] shrink-0">
        <span>ABC</span>
        <svg width="13" height="10" viewBox="0 0 13 10" fill="none" stroke="#8a8a8a" strokeWidth="1.100"><path d="M1 5l4 4 7-8" /></svg>
      </div>
      <div className="ml-[11px] w-[28px] h-[31px] bg-[#444444] flex items-center justify-center text-[18px] text-[#8a94e6] [font-family:'Liberation_Sans',sans-serif] shrink-0">Ab</div>
      <BSep ml="ml-[18px]" />
      <BSep ml="ml-[514px]" />
      <div className="ml-[17px] w-[17px] h-[17px] rounded-full border border-[#7d7d7d] flex overflow-hidden shrink-0">
        <div className="w-1/2 bg-[#7d7d7d]" />
      </div>
    </div>
  );
}

export default function App() {
  return (
    <div className="w-[1725px] h-[1008px] overflow-hidden rounded-[8px] bg-[#66200f] [font-family:Inter,sans-serif] text-[13px] flex flex-col">
      <TitleBar />
      <div className="flex-1 min-h-0 mx-px flex flex-col">
        <TabBar />
        <Ribbon />
        <div className="flex-1 min-h-0 flex">
          <Rail />
          <ThumbPanel />
          <DocArea />
          <RightPanel />
        </div>
        <BottomBar />
      </div>
    </div>
  );
}
